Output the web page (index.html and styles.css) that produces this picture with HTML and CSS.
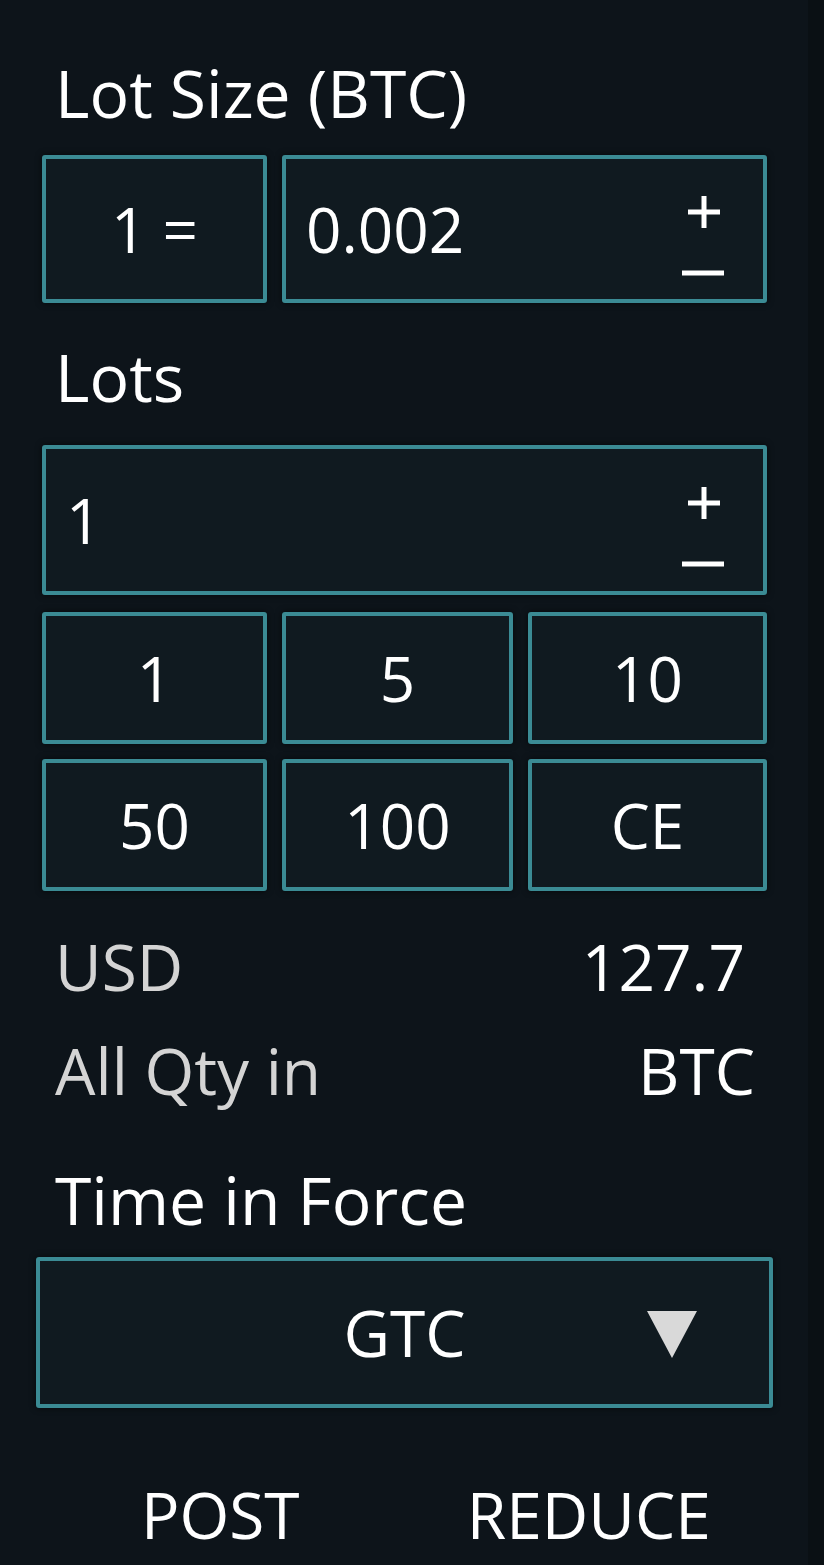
FILE: index.html
```html
<!DOCTYPE html>
<html lang="en">
<head>
    <meta charset="UTF-8">
    <meta name="viewport" content="width=device-width, initial-scale=1.0">
    <title>Order Quantity</title>
    <link rel="stylesheet" href="styles.css">
</head>
<body>
    <div class="panel">
        <div class="label first">Lot Size (BTC)</div>
        <div class="lot-row">
            <div class="box center">1 =</div>
            <div class="box field">
                <span class="value">0.002</span>
                <svg class="stepper" viewBox="0 0 44 100" width="44" height="100">
                    <path d="M7 33H39M23 17V49" stroke="#fff" stroke-width="5"/>
                    <path d="M1 94H43" stroke="#fff" stroke-width="5"/>
                </svg>
            </div>
        </div>

        <div class="label">Lots</div>
        <div class="box field lots">
            <span class="value">1</span>
            <svg class="stepper" viewBox="0 0 44 100" width="44" height="100">
                <path d="M7 33H39M23 17V49" stroke="#fff" stroke-width="5"/>
                <path d="M1 94H43" stroke="#fff" stroke-width="5"/>
            </svg>
        </div>

        <div class="presets">
            <button class="box">1</button>
            <button class="box">5</button>
            <button class="box">10</button>
            <button class="box">50</button>
            <button class="box">100</button>
            <button class="box">CE</button>
        </div>

        <div class="info">
            <span class="muted">USD</span>
            <span class="num">127.7</span>
        </div>
        <div class="info qty">
            <span class="muted">All Qty in</span>
            <span>BTC</span>
        </div>

        <div class="label tif">Time in Force</div>
        <div class="select box">
            <span>GTC</span>
            <span class="arrow"></span>
        </div>

        <div class="flags">
            <span>POST</span>
            <span>REDUCE</span>
        </div>
    </div>
</body>
</html>
```

FILE: styles.css
```css
body {
    margin: 0;
    background-color: #0a1014;
    font-family: "Open Sans", "Noto Sans", sans-serif;
    color: #fff;
}
.panel {
    width: 725px;
    padding: 0 41px 0 42px;
    height: 1565px;
    overflow: hidden;
    background-color: #0d141a;
}
.label {
    font-size: 66px;
    line-height: 80px;
    padding-left: 13px;
    margin: 33px 0 29px;
}
.label.first {
    margin-top: 52px;
    margin-bottom: 23px;
}
.box {
    box-sizing: border-box;
    border: 4px solid #3b8b94;
    border-radius: 3px;
    background-color: #101a20;
    box-shadow: 0 0 6px rgba(0, 0, 0, 0.6);
    color: #fff;
    font-family: inherit;
    font-size: 62px;
}
.center {
    display: flex;
    align-items: center;
    justify-content: center;
}
.lot-row {
    display: grid;
    grid-template-columns: 225px 1fr;
    gap: 15px;
    height: 148px;
}
.field {
    display: flex;
    align-items: center;
    justify-content: space-between;
    padding: 0 38px 0 20px;
}
.lots {
    height: 150px;
}
.stepper {
    display: block;
}
.presets {
    display: grid;
    grid-template-columns: 225px 231px 1fr;
    grid-auto-rows: 132px;
    gap: 15px;
    margin-top: 17px;
}
.presets button {
    padding: 0;
    cursor: pointer;
}
.info {
    display: flex;
    justify-content: space-between;
    font-size: 64px;
    line-height: 80px;
    padding: 0 22px 0 13px;
    margin-top: 36px;
}
.info.qty {
    margin-top: 24px;
    padding-right: 12px;
}
.muted {
    color: #d4d4d4;
}
.label.tif {
    margin-top: 48px;
    margin-bottom: 18px;
}
.select {
    position: relative;
    margin: 0 -6px;
    height: 151px;
    display: flex;
    align-items: center;
    justify-content: center;
    font-size: 64px;
}
.arrow {
    position: absolute;
    right: 72px;
    top: 50px;
    width: 0;
    height: 0;
    border-left: 25px solid transparent;
    border-right: 25px solid transparent;
    border-top: 47px solid #d9d9d9;
}
.flags {
    display: flex;
    margin: 67px -6px 0;
    font-size: 64px;
    line-height: 80px;
}
.flags span {
    flex: 1;
    text-align: center;
}
```
